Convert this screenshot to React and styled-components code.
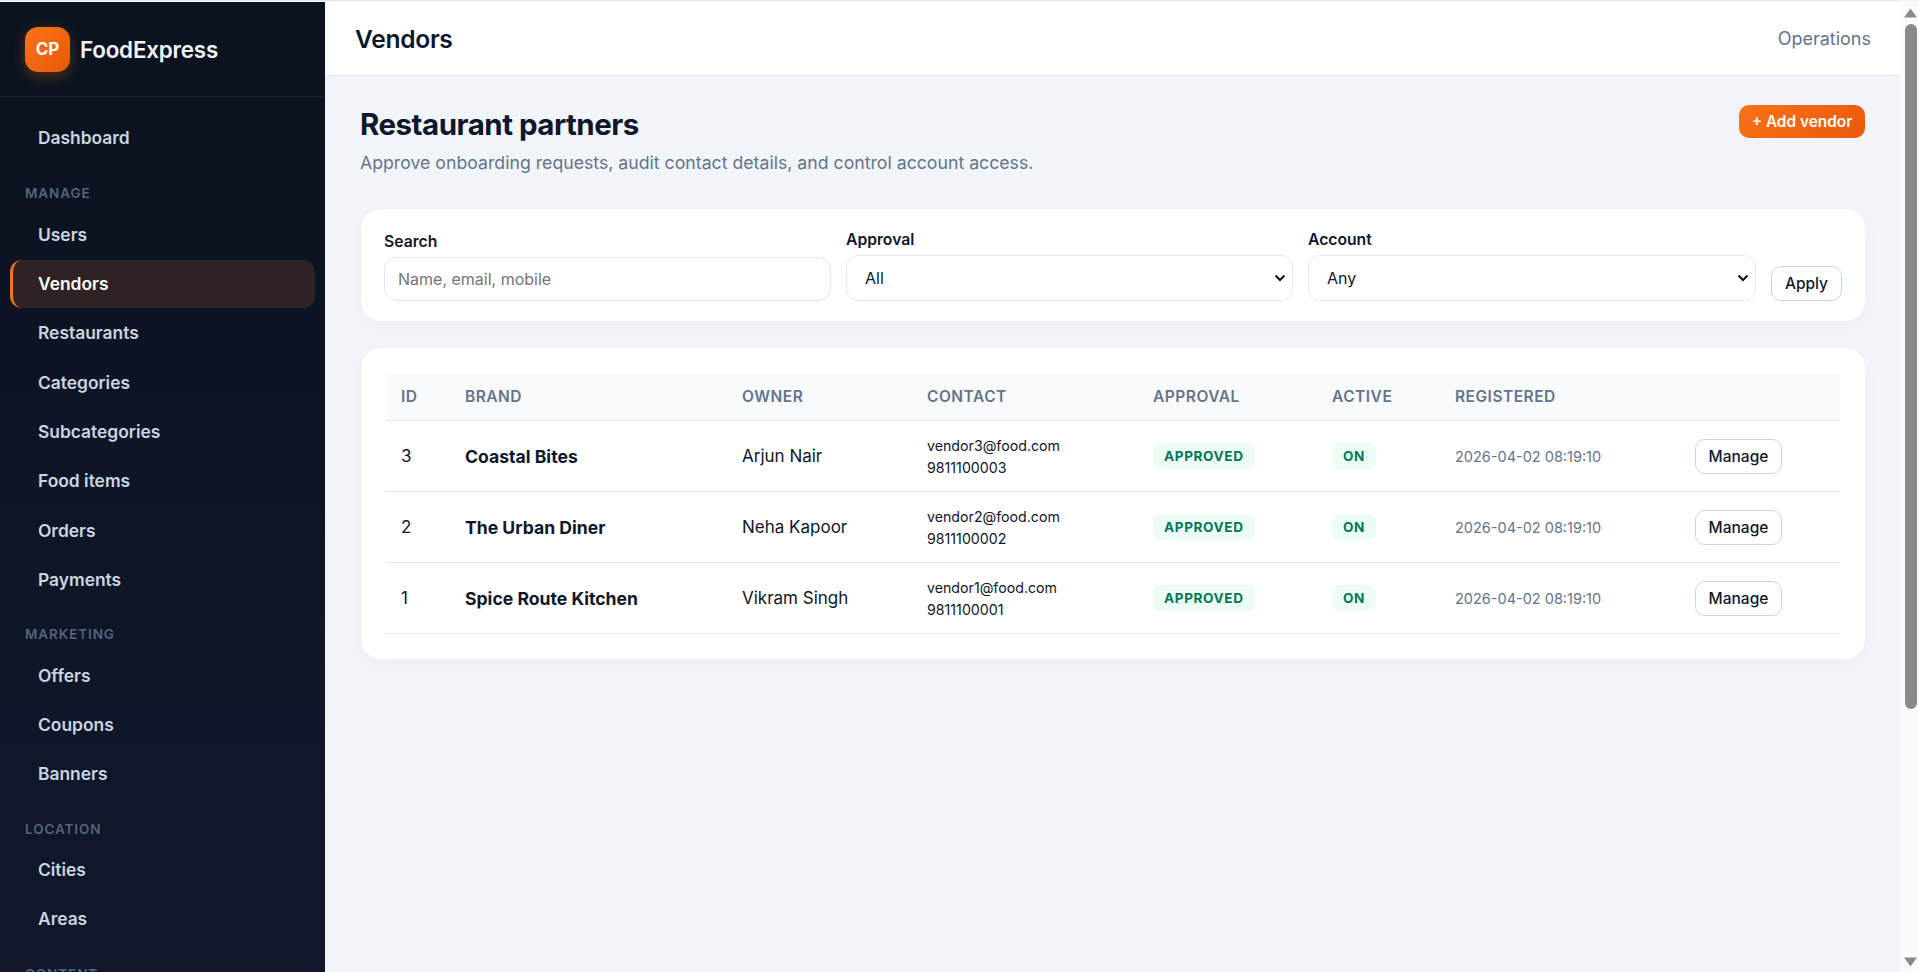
import React from "react";
import styled, { createGlobalStyle } from "styled-components";

const chevron = encodeURIComponent('<svg xmlns="http://www.w3.org/2000/svg" width="12" height="8"><path d="M1.5 1.5 L6 6 L10.5 1.5" fill="none" stroke="#111" stroke-width="2"/></svg>');

const Global = createGlobalStyle`
  html { background: #f1f5f9; }
  body { margin: 0; padding-right: 19px; font-family: Inter, "Liberation Sans", sans-serif; color: #0f172a; }
  * { box-sizing: border-box; }
`;

const Shell = styled.div`
  display: flex;
  min-height: 1325px;
  border-top: 1px solid #e2e5ea;
  padding-top: 1px;
  background: #fff;
`;

const Rail = styled.div`
  position: fixed;
  top: 2px;
  right: 0;
  bottom: 0;
  width: 19px;
  background: #fbfbfb;
  display: flex;
  flex-direction: column;
  align-items: center;
  justify-content: space-between;
  padding: 6px 0 5px 2px;
`;

const RailThumb = styled.div`
  width: 12px;
  height: 685px;
  margin: 6px 0 auto;
  border-radius: 6px;
  background: #8a8a8a;
`;

const Sidebar = styled.aside`
  width: 325px;
  flex: none;
  background: linear-gradient(180deg, #0b1320 0%, #0f172a 60%, #0f172a 100%);
`;

const Brand = styled.div`
  display: flex;
  align-items: center;
  gap: 10px;
  height: 95px;
  padding: 0 25px;
  border-bottom: 1px solid #1c2433;
`;

const Logo = styled.div`
  width: 45px;
  height: 45px;
  border-radius: 13px;
  background: linear-gradient(135deg, #f97316, #ea580c);
  box-shadow: 0 4px 14px rgba(249, 115, 22, 0.3);
  color: #fff;
  font-size: 17px;
  font-weight: 700;
  display: flex;
  align-items: center;
  justify-content: center;
`;

const BrandName = styled.div`
  color: #f1f5f9;
  font-size: 22.4px;
  font-weight: 600;
  letter-spacing: -0.2px;
`;

const Nav = styled.nav`
  display: flex;
  flex-direction: column;
  padding: 16px 10px 0;
`;

const Section = styled.div`
  height: 21px;
  margin: ${(p) => p.$first ? "20.5px 0 6.5px" : "19.5px 0 6px"};
  padding-left: 15px;
  font-size: 13.5px;
  line-height: 21px;
  font-weight: 600;
  letter-spacing: 0.9px;
  color: #56647a;
`;

const Item = styled.div`
  height: 48px;
  margin-bottom: 1.3px;
  display: flex;
  align-items: center;
  padding-left: ${(p) => p.$active ? "25px" : "28px"};
  font-size: 17.4px;
  font-weight: 600;
  color: ${(p) => p.$active ? "#ffffff" : "#cbd5e1"};
  border-radius: 12px;
  background: ${(p) => p.$active ? "#2e2322" : "transparent"};
  border-left: ${(p) => p.$active ? "3px solid #f97316" : "none"};
`;

const Main = styled.main`
  flex: 1;
  min-width: 0;
  background: #f1f5f9;
`;

const Header = styled.header`
  height: 74px;
  background: #fff;
  border-bottom: 1px solid #e2e8f0;
  display: flex;
  align-items: center;
  justify-content: space-between;
  padding: 0 29px 0 30px;
`;

const HeaderTitle = styled.h2`
  margin: 0;
  font-size: 24.6px;
  font-weight: 600;
  letter-spacing: -0.3px;
`;

const HeaderNote = styled.span`
  font-size: 18px;
  color: #64748b;
`;

const Content = styled.div`
  padding: 29px 35px 0 36px;
`;

const Hero = styled.div`
  display: flex;
  justify-content: space-between;
  align-items: flex-start;
  height: 104px;
  margin-left: -1px;
`;

const Title = styled.h1`
  margin: 1px 0 7px;
  font-size: 29.5px;
  line-height: 37px;
  font-weight: 700;
  letter-spacing: -0.5px;
`;

const Subtitle = styled.p`
  margin: 0;
  font-size: 17.7px;
  line-height: 26px;
  color: #64748b;
`;

const PrimaryButton = styled.button`
  width: 126px;
  height: 33px;
  border: none;
  border-radius: 10px;
  background: linear-gradient(135deg, #f97316, #ea580c);
  color: #fff;
  font: 600 15.4px Inter, sans-serif;
`;

const Card = styled.section`
  background: #fff;
  border-radius: 20px;
  box-shadow: 0 4px 20px rgba(15, 23, 42, 0.03);
`;

const FilterCard = styled(Card)`
  display: grid;
  grid-template-columns: 447px 447px 448px auto;
  column-gap: 15px;
  align-items: end;
  padding: 20px 23px;
  height: 112px;
  margin-bottom: 27px;
`;

const Field = styled.label`
  display: flex;
  flex-direction: column;
  gap: 5px;
  font-size: 15.7px;
  line-height: 20px;
  font-weight: 600;
`;

const TextInput = styled.input`
  height: 44px;
  padding: 0 13px;
  border: 1px solid #e2e8f0;
  border-radius: 12px;
  font: 400 16px Inter, sans-serif;
  outline: none;
  background: #fff;
`;

const SelectBox = styled.select`
  appearance: none;
  height: 46px;
  padding: 0 18px;
  border: 1px solid #e2e8f0;
  border-radius: 12px;
  font: 400 16px Inter, sans-serif;
  color: #0f172a;
  background: #fff url("data:image/svg+xml,${chevron}") no-repeat right 6px center;
`;

const OutlineButton = styled.button`
  width: ${(p) => p.$width || "71px"};
  height: 35px;
  border: 1px solid #cbd5e1;
  border-radius: 10px;
  background: #fff;
  color: #0f172a;
  font: 500 15.5px Inter, sans-serif;
`;

const TableCard = styled(Card)`
  padding: 25px;
  height: 311px;
`;

const Table = styled.table`
  width: 100%;
  table-layout: fixed;
  border-collapse: collapse;
`;

const Th = styled.th`
  height: 47px;
  padding: 0 15px;
  text-align: left;
  background: #f8fafc;
  border-bottom: 1px solid #e2e8f0;
  color: #64748b;
  font-size: 15.5px;
  font-weight: 600;
  letter-spacing: 0.5px;
`;

const Td = styled.td`
  height: 71px;
  padding: 1px 15px 0;
  border-bottom: 1px solid #e2e8f0;
  font-size: 17px;
  color: #0f172a;
`;

const BrandCell = styled(Td)`
  font-size: 17.6px;
  font-weight: 700;
`;

const ContactCell = styled(Td)`
  padding-top: 3px;
  font-size: 14.2px;
  line-height: 22px;
`;

const DateCell = styled(Td)`
  font-size: 14.5px;
  color: #64748b;
`;

const Pill = styled.span`
  display: inline-flex;
  align-items: center;
  height: 26px;
  padding: 0 11px;
  border-radius: 8px;
  background: #ecfdf5;
  color: #047857;
  font-size: 13.6px;
  font-weight: 700;
  letter-spacing: 0.6px;
`;

const sections = [
  { items: ["Dashboard"] },
  { label: "MANAGE", first: true, items: ["Users", "Vendors", "Restaurants", "Categories", "Subcategories", "Food items", "Orders", "Payments"] },
  { label: "MARKETING", items: ["Offers", "Coupons", "Banners"] },
  { label: "LOCATION", items: ["Cities", "Areas"] },
  { label: "CONTENT", items: [] },
];

const vendors = [
  { id: 3, brand: "Coastal Bites", owner: "Arjun Nair", email: "vendor3@food.com", phone: "9811100003" },
  { id: 2, brand: "The Urban Diner", owner: "Neha Kapoor", email: "vendor2@food.com", phone: "9811100002" },
  { id: 1, brand: "Spice Route Kitchen", owner: "Vikram Singh", email: "vendor1@food.com", phone: "9811100001" },
];

const columns = [["ID", 64], ["BRAND", 277], ["OWNER", 185], ["CONTACT", 226], ["APPROVAL", 179], ["ACTIVE", 123], ["REGISTERED", 240], ["", 160]];

export default function App() {
  return (
    <>
      <Global />
      <Shell>
        <Sidebar>
          <Brand>
            <Logo>CP</Logo>
            <BrandName>FoodExpress</BrandName>
          </Brand>
          <Nav>
            {sections.map((s, i) => (
              <React.Fragment key={i}>
                {s.label && <Section $first={s.first}>{s.label}</Section>}
                {s.items.map((it) => (
                  <Item key={it} $active={it === "Vendors"}>{it}</Item>
                ))}
              </React.Fragment>
            ))}
          </Nav>
        </Sidebar>
        <Main>
          <Header>
            <HeaderTitle>Vendors</HeaderTitle>
            <HeaderNote>Operations</HeaderNote>
          </Header>
          <Content>
            <Hero>
              <div>
                <Title>Restaurant partners</Title>
                <Subtitle>Approve onboarding requests, audit contact details, and control account access.</Subtitle>
              </div>
              <PrimaryButton>+ Add vendor</PrimaryButton>
            </Hero>
            <FilterCard>
              <Field>Search<TextInput placeholder="Name, email, mobile" /></Field>
              <Field>Approval<SelectBox><option>All</option></SelectBox></Field>
              <Field>Account<SelectBox><option>Any</option></SelectBox></Field>
              <OutlineButton>Apply</OutlineButton>
            </FilterCard>
            <TableCard>
              <Table>
                <colgroup>{columns.map(([n, w], i) => <col key={i} width={w} />)}</colgroup>
                <thead>
                  <tr>{columns.map(([n], i) => <Th key={i}>{n}</Th>)}</tr>
                </thead>
                <tbody>
                  {vendors.map((v) => (
                    <tr key={v.id}>
                      <Td>{v.id}</Td>
                      <BrandCell>{v.brand}</BrandCell>
                      <Td>{v.owner}</Td>
                      <ContactCell>{v.email}<br />{v.phone}</ContactCell>
                      <Td><Pill>APPROVED</Pill></Td>
                      <Td><Pill>ON</Pill></Td>
                      <DateCell>2026-04-02 08:19:10</DateCell>
                      <Td><OutlineButton $width="87px">Manage</OutlineButton></Td>
                    </tr>
                  ))}
                </tbody>
              </Table>
            </TableCard>
          </Content>
        </Main>
      </Shell>
      <Rail>
        <svg width="13" height="10" viewBox="0 0 13 10"><path d="M6.5 0.5 L13 9.5 H0 Z" fill="#8a8a8a" /></svg>
        <RailThumb />
        <svg width="13" height="10" viewBox="0 0 13 10"><path d="M6.5 9.5 L13 0.5 H0 Z" fill="#8a8a8a" /></svg>
      </Rail>
    </>
  );
}
